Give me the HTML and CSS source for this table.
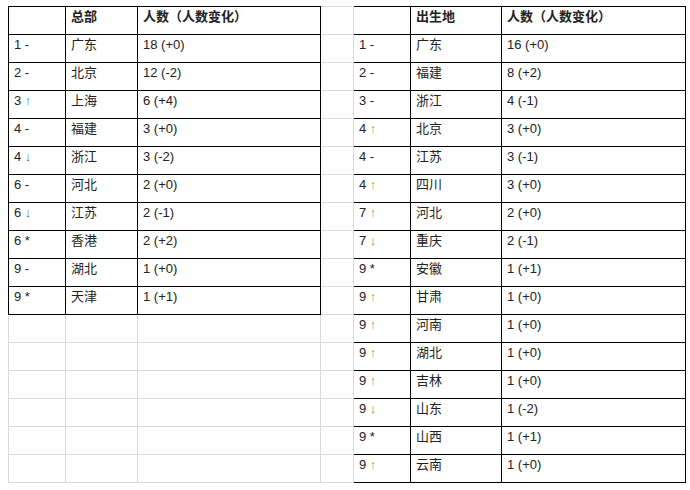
FILE: index.html
```html
<!DOCTYPE html>
<html lang="zh">
<head>
<meta charset="utf-8">
<link rel="stylesheet" href="styles.css">
</head>
<body>
<div class="sheet">
  <div class="c r1 ca t"></div><div class="c r1 t h">总部</div><div class="c r1 t h">人数（人数变化）</div><div class="c r1"></div><div class="c r1 u"></div><div class="c r1 u h">出生地</div><div class="c r1 u h">人数（人数变化）</div>

  <div class="c ca t">1 -</div><div class="c t">广东</div><div class="c t">18 (+0)</div><div class="c"></div><div class="c u">1 -</div><div class="c u">广东</div><div class="c u">16 (+0)</div>
  <div class="c ca t">2 -</div><div class="c t">北京</div><div class="c t">12 (-2)</div><div class="c"></div><div class="c u">2 -</div><div class="c u">福建</div><div class="c u">8 (+2)</div>
  <div class="c ca t">3 <span class="al">↑</span></div><div class="c t">上海</div><div class="c t">6 (+4)</div><div class="c"></div><div class="c u">3 -</div><div class="c u">浙江</div><div class="c u">4 (-1)</div>
  <div class="c ca t">4 -</div><div class="c t">福建</div><div class="c t">3 (+0)</div><div class="c"></div><div class="c u">4 <span class="ar">↑</span></div><div class="c u">北京</div><div class="c u">3 (+0)</div>
  <div class="c ca t">4 <span class="al">↓</span></div><div class="c t">浙江</div><div class="c t">3 (-2)</div><div class="c"></div><div class="c u">4 -</div><div class="c u">江苏</div><div class="c u">3 (-1)</div>
  <div class="c ca t">6 -</div><div class="c t">河北</div><div class="c t">2 (+0)</div><div class="c"></div><div class="c u">4 <span class="ar">↑</span></div><div class="c u">四川</div><div class="c u">3 (+0)</div>
  <div class="c ca t">6 <span class="al">↓</span></div><div class="c t">江苏</div><div class="c t">2 (-1)</div><div class="c"></div><div class="c u">7 <span class="ar">↑</span></div><div class="c u">河北</div><div class="c u">2 (+0)</div>
  <div class="c ca t">6 *</div><div class="c t">香港</div><div class="c t">2 (+2)</div><div class="c"></div><div class="c u">7 <span class="ar">↓</span></div><div class="c u">重庆</div><div class="c u">2 (-1)</div>
  <div class="c ca t">9 -</div><div class="c t">湖北</div><div class="c t">1 (+0)</div><div class="c"></div><div class="c u">9 *</div><div class="c u">安徽</div><div class="c u">1 (+1)</div>
  <div class="c ca t">9 *</div><div class="c t">天津</div><div class="c t">1 (+1)</div><div class="c"></div><div class="c u">9 <span class="ar">↑</span></div><div class="c u">甘肃</div><div class="c u">1 (+0)</div>

  <div class="c ca"></div><div class="c"></div><div class="c"></div><div class="c"></div><div class="c u">9 <span class="ar">↑</span></div><div class="c u">河南</div><div class="c u">1 (+0)</div>
  <div class="c ca"></div><div class="c"></div><div class="c"></div><div class="c"></div><div class="c u">9 <span class="ar">↑</span></div><div class="c u">湖北</div><div class="c u">1 (+0)</div>
  <div class="c ca"></div><div class="c"></div><div class="c"></div><div class="c"></div><div class="c u">9 <span class="ar">↑</span></div><div class="c u">吉林</div><div class="c u">1 (+0)</div>
  <div class="c ca"></div><div class="c"></div><div class="c"></div><div class="c"></div><div class="c u">9 <span class="ar">↓</span></div><div class="c u">山东</div><div class="c u">1 (-2)</div>
  <div class="c ca"></div><div class="c"></div><div class="c"></div><div class="c"></div><div class="c u">9 *</div><div class="c u">山西</div><div class="c u">1 (+1)</div>
  <div class="c ca"></div><div class="c"></div><div class="c"></div><div class="c"></div><div class="c u">9 <span class="ar">↑</span></div><div class="c u">云南</div><div class="c u">1 (+0)</div>
</div>
</body>
</html>
```
FILE: styles.css
```css
html, body {
  margin: 0;
  padding: 0;
  background: #ffffff;
}

.sheet {
  display: grid;
  grid-template-columns: 58px 72px 183px 33px 57px 91px 184px;
  grid-template-rows: 29px repeat(16, 28px);
  width: max-content;
  margin: 6px 0 0 8px;
}

.c {
  box-sizing: border-box;
  border-right: 1px solid #d9d9d9;
  border-bottom: 1px solid #d9d9d9;
  padding: 2px 5px 0;
  font-family: "Liberation Sans", "Noto Sans CJK SC", sans-serif;
  font-size: 13px;
  line-height: 16px;
  color: #222222;
  white-space: nowrap;
  overflow: hidden;
}

.r1 {
  border-top: 1px solid #d9d9d9;
}

.ca {
  border-left: 1px solid #d9d9d9;
}

.t, .u {
  border-right-color: #000000;
  border-bottom-color: #000000;
}

.r1.t, .r1.u {
  border-top-color: #000000;
}

.ca.t {
  border-left-color: #000000;
}

.h {
  font-weight: bold;
}

.al {
  color: #3f7fc4;
}

.ar {
  color: #b5823f;
}
```
